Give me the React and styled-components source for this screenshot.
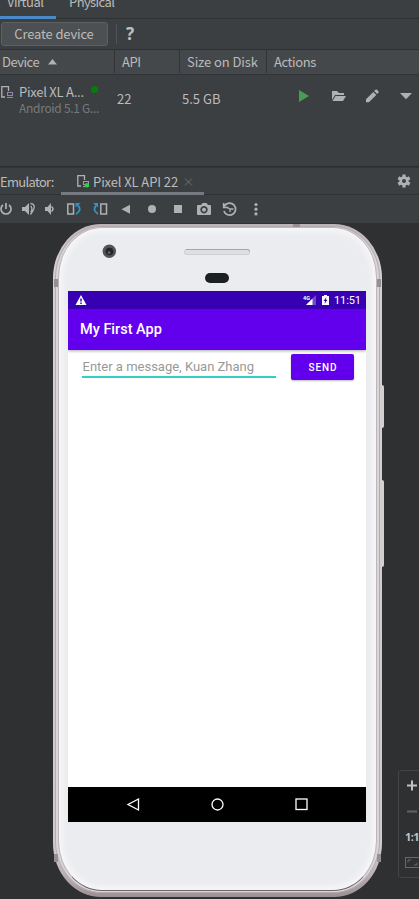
import React from "react";
import styled, { createGlobalStyle } from "styled-components";

const GlobalStyle = createGlobalStyle`
  * { box-sizing: border-box; }
  html, body { margin: 0; padding: 0; background: #2e3032; overflow: hidden; }
`;

const Page = styled.div`
  width: 419px;
  height: 899px;
  display: flex;
  flex-direction: column;
  overflow: hidden;
  background: #3c3f41;
  color: #bbbbbb;
  font: 13px/18px "Noto Sans CJK SC", "Noto Sans", sans-serif;
  white-space: nowrap;
`;

const Label = styled.span`
  display: inline-block;
  letter-spacing: ${(p) => p.$track || 0}px;
`;

const Tabs = styled.nav`
  display: flex;
  height: 19px;
  flex: none;
  border-bottom: 1px solid #2f3133;
`;

const Tab = styled.div`
  display: flex;
  align-items: flex-start;
  width: ${(p) => p.$width}px;
  height: 19px;
  padding-left: ${(p) => p.$pad}px;
  border-bottom: 3px solid ${(p) => (p.$active ? "#4a88c7" : "transparent")};
  & > span { margin-top: -7px; }
`;

const Toolbar = styled.div`
  display: flex;
  align-items: center;
  height: 31px;
  flex: none;
  padding-left: 1px;
  border-bottom: 1px solid #2f3133;
`;

const CreateButton = styled.button`
  width: 107px;
  height: 24px;
  padding: 0 1px 0 0;
  border: 1px solid #5e6060;
  border-radius: 3px;
  background: #4c5052;
  color: #bbbbbb;
  font: inherit;
`;

const Divider = styled.div`
  width: 1px;
  height: 20px;
  margin-left: 8px;
  background: #515456;
`;

const Help = styled.span`
  margin: 0 0 0 9px;
  color: #bdc0c2;
  font: 700 17px/20px "Noto Sans", sans-serif;
`;

const columns = "115px 65px 87px 1fr";

const TableHead = styled.div`
  display: grid;
  grid-template-columns: ${columns};
  height: 25px;
  flex: none;
  background: #45484a;
  border-bottom: 1px solid #323537;
`;

const HeadCell = styled.div`
  display: flex;
  align-items: center;
  gap: 9px;
  margin-bottom: 1px;
  padding-top: 1px;
  padding-left: ${(p) => p.$pad}px;
  border-right: ${(p) => (p.$last ? "none" : "1px solid #333638")};
`;

const DeviceRow = styled.div`
  display: grid;
  grid-template-columns: ${columns};
  height: 92px;
  flex: none;
  border-bottom: 1px solid #2b2d2e;
`;

const DeviceCell = styled.div`
  display: grid;
  grid-template-columns: 19px auto;
  align-content: start;
  padding-top: 9px;
`;

const DeviceName = styled.div`
  display: flex;
  align-items: center;
  height: 15px;
  line-height: 15px;
`;

const Dot = styled.i`
  width: 7px;
  height: 7px;
  margin: -4px 0 0 7px;
  border-radius: 50%;
  background: #087c0b;
`;

const Sub = styled.div`
  grid-column: 2;
  color: #777a7c;
  font-size: 12px;
  line-height: 15px;
`;

const ValueCell = styled.div`
  padding: 15px 0 0 ${(p) => p.$pad}px;
`;

const ActionsCell = styled.div`
  padding-top: 11px;
  padding-left: 27px;
`;

const EmulatorBar = styled.div`
  display: flex;
  height: 28px;
  flex: none;
  border-top: 1px solid #323537;
  border-bottom: 1px solid #303335;
`;

const BarTitle = styled.div`
  width: 61px;
  padding-top: 5px;
`;

const EmulatorTab = styled.div`
  display: flex;
  width: 143px;
  height: 27px;
  padding: 5px 0 0 15px;
  border-bottom: 3px solid #747a80;
  & > svg { flex: none; }
`;

const Gear = styled.div`
  margin: 4px 7px 0 auto;
  height: 18px;
`;

const ControlBar = styled.div`
  height: 28px;
  flex: none;
`;

const Stage = styled.main`
  position: relative;
  flex: 1;
  display: flex;
  background: #2e3032;
`;

const PhoneFrame = styled.div`
  position: relative;
  width: 329px;
  height: 673px;
  margin: 1px 0 0 53px;
  padding: 2px 2px 4px 2px;
  border-radius: 48px / 54px;
  background: linear-gradient(to bottom, #bcb3b6, #d6d0d3 6%, #d0cacd 94%, #9c9092);
`;

const PhoneRim = styled.div`
  height: 100%;
  padding: 0 2px 1px;
  border-radius: 46px / 52px;
  border: 1px solid #b4adb0;
  background: #dad5d8;
`;

const PhoneFace = styled.div`
  height: 100%;
  border-radius: 44px / 50px;
  border: 1px solid #bdb6b9;
  border-bottom-color: #6e6468;
  background: #ebecef;
  box-shadow: inset 0 0 6px 3px #f8f8fb;
  padding: 1px 9px 0;
`;

const BezelArt = styled.svg`
  display: block;
  width: 298px;
  height: 62px;
`;

const SideButton = styled.i`
  position: absolute;
  right: -2px;
  top: ${(p) => p.$top}px;
  width: 2px;
  height: ${(p) => p.$height}px;
  border-radius: 0 2px 2px 0;
  background: #d4cfd1;
`;

const AntennaMark = styled.i`
  position: absolute;
  left: ${(p) => p.$left}px;
  top: ${(p) => p.$top}px;
  width: ${(p) => p.$w}px;
  height: ${(p) => p.$h}px;
  background: #978e92;
`;

const Screen = styled.section`
  display: flex;
  flex-direction: column;
  width: 298px;
  height: 531px;
  background: #fff;
  font-family: Roboto, sans-serif;
`;

const StatusBar = styled.div`
  display: flex;
  align-items: center;
  height: 18px;
  flex: none;
  padding: 0 6px 0 7px;
  background: #3700b3;
  color: #fff;
  font: 400 11px/18px Roboto, sans-serif;
  & > svg:nth-child(2) { margin-left: auto; }
  & > span { width: 26px; margin: 1px 0 0 3px; letter-spacing: -0.1px; text-align: right; }
`;

const AppBar = styled.header`
  height: 41px;
  flex: none;
  padding-left: 12px;
  background: #6200ee;
  color: #fff;
  font: 500 14.5px/42px Roboto, sans-serif;
  box-shadow: 0 1px 3px #0005;
  clip-path: inset(0 0 -5px 0);
`;

const Form = styled.div`
  display: flex;
  flex: 1;
  align-items: flex-start;
  padding: 4px 12px 0 14px;
`;

const MessageField = styled.div`
  width: 194px;
  height: 24px;
  border-bottom: 2px solid #35cfc0;
  color: #999;
  font: 13px/26px Roboto, sans-serif;
  padding-left: 0.5px;
`;

const SendButton = styled.button`
  width: 63px;
  height: 26px;
  margin-left: auto;
  padding: 1px 0 0 1px;
  border: 0;
  border-radius: 2px;
  background: #6200ee;
  box-shadow: 0 1px 2px #0004;
  color: #fff;
  font: 500 10px/24px Roboto, sans-serif;
  letter-spacing: 0.9px;
`;

const NavBar = styled.footer`
  display: flex;
  align-items: center;
  justify-content: center;
  gap: 69px;
  height: 35px;
  background: #000;
`;

const ZoomPanel = styled.aside`
  position: absolute;
  left: 398px;
  top: 547px;
  width: 30px;
  height: 108px;
  display: flex;
  flex-direction: column;
  padding: 7px 0 0 6px;
  border: 1px solid #424547;
  border-radius: 3px;
  color: #bfc1c2;
  & > span { font: 700 11px/16px "Noto Sans", sans-serif; letter-spacing: -0.6px; margin: 9px 0 10px; }
`;

const PhoneGlyph = ({ live }) => (
  <svg width={live ? 17 : 19} height="16" viewBox={live ? "0 0 17 16" : "0 0 19 16"} fill="none">
    <path d="M5 13H1.800V2.700H8.500V7" stroke="#afb1b3" strokeWidth="1.300" />
    <rect x="7.500" y="8.500" width="5" height="3" stroke={live ? "#9aa0a5" : "#9684b6"} />
    <path d="M7 13.500h6" stroke={live ? "#9aa0a5" : "#9684b6"} />
    {live && <circle cx="11" cy="12.300" r="2.200" fill="#20d83a" />}
  </svg>
);

const ActionIcons = () => (
  <svg width="125" height="22" viewBox="294 86 125 22" fill="#afb1b3">
    <path d="M299 90l10 6-10 6z" fill="#499c54" />
    <path d="M332 91h5l2 2h5v2h-9l-3 5z" />
    <path d="M335.500 96H346l-3 5h-10.500z" />
    <path d="M366 99.300l7.300-7.400 3 3-7.400 7.300H366zM374.100 91.100l1.300-1.300q.8-.8 1.600 0l1.400 1.400q.8.8 0 1.600l-1.300 1.300z" />
    <path d="M400 93h12l-6 6.200z" />
  </svg>
);

const ControlIcons = () => (
  <svg width="419" height="28" viewBox="0 195 419 28" fill="#afb1b3">
    <g fill="none" stroke="#afb1b3" strokeWidth="1.700">
      <path d="M3 205a5 5 0 1 0 6 0M6 203v6" />
      <path d="M30.700 206q2.500 3 0 6M30.500 203.500q7.500 1 0 11" strokeWidth="1.300" />
      <path d="M51.500 206.500q3 2.500 0 5" strokeWidth="1.600" />
      <rect x="67.800" y="204" width="5.700" height="10" strokeWidth="1.500" />
      <rect x="100.800" y="204" width="5.700" height="10" strokeWidth="1.500" />
      <g stroke="#3592c4" strokeWidth="1.900">
        <path d="M78 205.500q4.500 4.500-2 8.500" />
        <path d="M96 205.500q-4 4.500 2 8.500" />
      </g>
      <path d="M224.500 206a6 6 0 1 1-.6 5M223.700 203v4.500h4.700" strokeWidth="1.700" />
      <path d="M230 212v-3h3.500M230 209l-3-1.500" strokeWidth="1.300" />
    </g>
    <path d="M22 207h3l4-4v12l-4-4h-3zM45 207h2.500l3.500-4v12l-3.500-4H45z" />
    <path d="M75.500 203h5l-5 4.500zM93 203h5v4.500z" fill="#3592c4" />
    <path d="M130 204.700v9l-8.500-4.500z" />
    <circle cx="152" cy="209" r="4" />
    <rect x="174" y="205" width="8" height="8" />
    <path fillRule="evenodd" d="M198 205h3l1.500-2h4l1.500 2h2q1 0 1 1v8q0 1-1 1h-12q-1 0-1-1v-8q0-1 1-1zM204 206a3.700 3.700 0 1 0 .01 0zM204 207.700a2 2 0 1 1-.01 0z" />
    <circle cx="256" cy="204.500" r="1.600" /><circle cx="256" cy="209.200" r="1.600" /><circle cx="256" cy="213.900" r="1.600" />
  </svg>
);

const GearIcon = () => (
  <svg width="16" height="18" viewBox="-8 -9 16 18">
    <g fill="#afb1b3">
      {[0, 60, 120].map((a) => <rect key={a} x="-1.600" y="-6.500" width="3.200" height="13" transform={`rotate(${a})`} />)}
      <circle r="4.700" />
    </g>
    <circle r="2" fill="#3c3f41" />
  </svg>
);

const BezelDetails = () => (
  <BezelArt viewBox="68 229 298 62">
    <circle cx="109.300" cy="251.200" r="6.700" fill="#515354" />
    <circle cx="109.500" cy="251.500" r="3.800" fill="#202426" />
    <circle cx="109" cy="252.500" r="1.500" fill="#59615e" />
    <rect x="184.500" y="249.500" width="65" height="5" rx="2" fill="#dedfe2" stroke="#cfcfd2" />
    <path d="M186 249.500h62q1.500 0 1.500 2" stroke="#a5a5aa" fill="none" />
    <rect x="205" y="273" width="24" height="10" rx="5" fill="#1d2023" />
  </BezelArt>
);

const StatusIcons = () => (
  <svg width="29" height="14" viewBox="302 293 29 14" fill="#fff">
    <path d="M316 295v10h-10z" fill="#7049ca" />
    <path d="M312.500 298.500v6.500H306z" />
    <text x="303" y="299.500" fontSize="5.500" fontWeight="700" fontFamily="Roboto">4G</text>
    <path d="M322 296h2v-1h3v1h2v9h-7z" />
    <path d="M326.500 297l-3 4h1.700l-.7 3 3-4.200h-1.700z" fill="#3700b3" />
  </svg>
);

export default function App() {
  return (
    <>
      <GlobalStyle />
      <Page>
        <Tabs>
          <Tab $width={56} $pad={7} $active><Label $track={-0.5}>Virtual</Label></Tab>
          <Tab $width={80} $pad={13}><Label $track={-0.6}>Physical</Label></Tab>
        </Tabs>
        <Toolbar>
          <CreateButton><Label $track={-0.15}>Create device</Label></CreateButton>
          <Divider />
          <Help>?</Help>
        </Toolbar>
        <TableHead>
          <HeadCell $pad={2}>
            <Label $track={-0.5}>Device</Label>
            <svg width="9" height="6"><path d="M0 5.500h9L4.500 0z" fill="#afb1b3" /></svg>
          </HeadCell>
          <HeadCell $pad={7}><Label $track={-0.4}>API</Label></HeadCell>
          <HeadCell $pad={7}><Label $track={-0.1}>Size on Disk</Label></HeadCell>
          <HeadCell $pad={7} $last><Label $track={-0.4}>Actions</Label></HeadCell>
        </TableHead>
        <DeviceRow>
          <DeviceCell>
            <PhoneGlyph />
            <DeviceName><Label $track={-0.25}>Pixel XL A...</Label><Dot /></DeviceName>
            <Sub><Label $track={-0.3}>Android 5.1 G...</Label></Sub>
          </DeviceCell>
          <ValueCell $pad={2}>22</ValueCell>
          <ValueCell $pad={2}>5.5 GB</ValueCell>
          <ActionsCell><ActionIcons /></ActionsCell>
        </DeviceRow>
        <EmulatorBar>
          <BarTitle><Label $track={-0.7}>Emulator:</Label></BarTitle>
          <EmulatorTab>
            <PhoneGlyph live />
            <Label $track={-0.1}>Pixel XL API 22</Label>
            <svg width="20" height="18" stroke="#6e7173" fill="none"><path d="M7 5.500l7 7M14 5.500l-7 7" /></svg>
          </EmulatorTab>
          <Gear><GearIcon /></Gear>
        </EmulatorBar>
        <ControlBar><ControlIcons /></ControlBar>
        <Stage>
          <PhoneFrame>
            <SideButton $top={161} $height={43} />
            <SideButton $top={256} $height={87} />
            <PhoneRim>
              <PhoneFace>
                <BezelDetails />
                <Screen>
                  <StatusBar>
                    <svg width="12" height="12" viewBox="0 0 12 12"><path d="M6 1L11.500 11H.5z" fill="#fff" /><path d="M6 4.500v3M6 8.500V10" stroke="#3700b3" strokeWidth="1.500" /></svg>
                    <StatusIcons />
                    <span>11:51</span>
                  </StatusBar>
                  <AppBar>My First App</AppBar>
                  <Form>
                    <MessageField>Enter a message, Kuan Zhang</MessageField>
                    <SendButton>SEND</SendButton>
                  </Form>
                  <NavBar>
                    <svg width="15" height="15" fill="none" stroke="#fff" strokeWidth="1.300"><path d="M12.500 2v11L2 7.500z" /></svg>
                    <svg width="15" height="15" fill="none" stroke="#fff" strokeWidth="1.300"><circle cx="7.500" cy="7.500" r="5.500" /></svg>
                    <svg width="15" height="15" fill="none" stroke="#fff" strokeWidth="1.300"><rect x="2" y="2" width="11" height="10.500" /></svg>
                  </NavBar>
                </Screen>
              </PhoneFace>
            </PhoneRim>
            <AntennaMark $left={240} $top={0} $w={7} $h={3} />
            <AntennaMark $left={1} $top={55} $w={4} $h={8} />
            <AntennaMark $left={324} $top={55} $w={4} $h={8} />
            <AntennaMark $left={1} $top={630} $w={4} $h={8} />
            <AntennaMark $left={324} $top={630} $w={4} $h={8} />
          </PhoneFrame>
          <ZoomPanel>
            <svg width="14" height="42" fill="none" strokeWidth="2"><path d="M2 7.500h10M7 2.500v10" stroke="#bfc1c2" /><path d="M2 33.500h10" stroke="#606365" /></svg>
            <span>1:1</span>
            <svg width="16" height="16" fill="none" stroke="#66696b"><rect x=".5" y="2.500" width="14" height="10" /><path d="M3 7.500V5h3M9 10h3V7.500" /></svg>
          </ZoomPanel>
        </Stage>
      </Page>
    </>
  );
}
